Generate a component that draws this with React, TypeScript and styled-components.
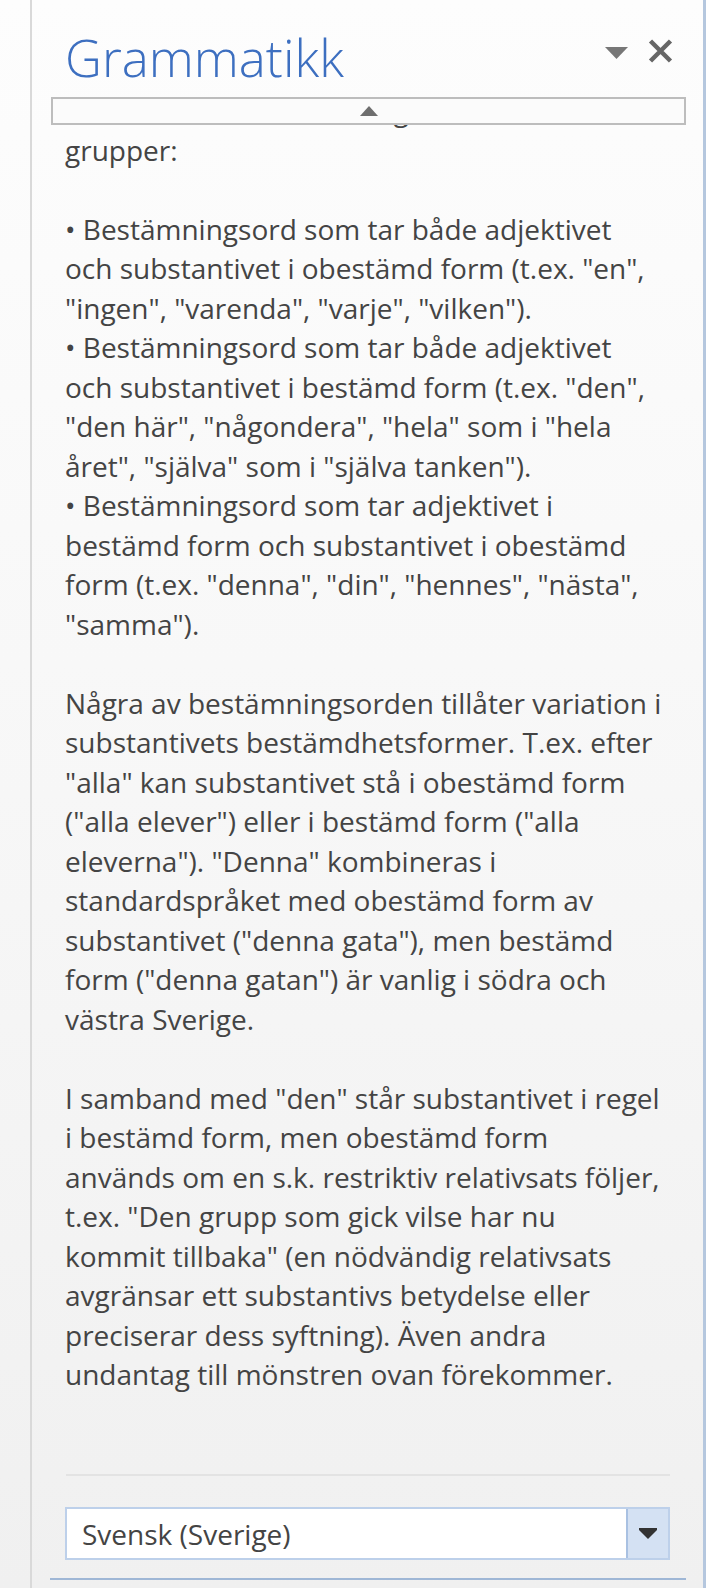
import React from "react";
import styled, { createGlobalStyle } from "styled-components";

const Global = createGlobalStyle`
  html, body { margin: 0; padding: 0; }
  body {
    width: 706px;
    height: 1588px;
    overflow: hidden;
    background: #f4f4f4;
    font-family: "Open Sans", "Noto Sans", sans-serif;
  }
`;

const Frame = styled.div`
  display: flex;
  width: 706px;
  height: 1588px;
  background: linear-gradient(180deg, #fdfdfd 0%, #f7f7f7 50%, #f0f0f0 100%);
`;

const Gutter = styled.div`
  width: 30px;
  flex: none;
`;

const Pane = styled.div`
  flex: 1;
  min-width: 0;
  display: flex;
  flex-direction: column;
  border-left: 2px solid #d9d9d9;
  border-right: 3px solid #b5c7de;
  overflow: hidden;
`;

const Header = styled.header`
  display: flex;
  align-items: flex-start;
  height: 89px;
  box-sizing: border-box;
  padding: 25px 30px 0 33px;
  flex: none;
`;

const Title = styled.h1`
  flex: 1;
  margin: 0;
  font-family: "Open Sans", "Noto Sans", sans-serif;
  font-weight: 300;
  font-size: 51px;
  line-height: 64px;
  color: #3d6fc0;
`;

const Controls = styled.div`
  display: flex;
  align-items: flex-start;
  gap: 20px;
  margin-top: 14px;
`;

const MenuIcon = styled.svg`
  margin-top: 8px;
  display: block;
`;

const CloseIcon = styled.svg`
  display: block;
`;

const Body = styled.div`
  position: relative;
  flex: 1;
  overflow: hidden;
`;

const ScrollUp = styled.div`
  position: absolute;
  top: 8px;
  left: 19px;
  right: 17px;
  height: 28px;
  box-sizing: border-box;
  border: 2px solid #bdbdbd;
  background: #fbfbfb;
  display: flex;
  align-items: center;
  justify-content: center;
`;

const Text = styled.div`
  padding: 2px 0 0 33px;
  font-size: 28px;
  line-height: 39.5px;
  color: #444444;
  white-space: nowrap;
`;

const Line = styled.div`
  height: 39.5px;
`;

const Footer = styled.footer`
  flex: none;
  display: flex;
  flex-direction: column;
  padding-bottom: 8px;
`;

const Rule = styled.div`
  height: 2px;
  background: #e3e3e3;
  margin: 0 33px 0 34px;
`;

const Select = styled.div`
  display: flex;
  height: 53px;
  box-sizing: border-box;
  margin: 31px 33px 0 33px;
  border: 2px solid #bdd0ea;
  background: #ffffff;
`;

const SelectValue = styled.div`
  flex: 1;
  display: flex;
  align-items: center;
  padding-left: 15px;
  font-size: 28px;
  color: #444444;
`;

const SelectButton = styled.div`
  width: 42px;
  box-sizing: border-box;
  border-left: 2px solid #a9c1e2;
  background: #d4e1f3;
  display: flex;
  align-items: center;
  justify-content: center;
`;

const BottomLine = styled.div`
  height: 2px;
  background: #9fb7d6;
  margin: 18px 17px 0 18px;
`;

const lines: string[] = [
  "grupper:",
  "",
  "• Bestämningsord som tar både adjektivet",
  'och substantivet i obestämd form (t.ex. "en",',
  '"ingen", "varenda", "varje", "vilken").',
  "• Bestämningsord som tar både adjektivet",
  'och substantivet i bestämd form (t.ex. "den",',
  '"den här", "någondera", "hela" som i "hela',
  'året", "själva" som i "själva tanken").',
  "• Bestämningsord som tar adjektivet i",
  "bestämd form och substantivet i obestämd",
  'form (t.ex. "denna", "din", "hennes", "nästa",',
  '"samma").',
  "",
  "Några av bestämningsorden tillåter variation i",
  "substantivets bestämdhetsformer. T.ex. efter",
  '"alla" kan substantivet stå i obestämd form',
  '("alla elever") eller i bestämd form ("alla',
  'eleverna"). "Denna" kombineras i',
  "standardspråket med obestämd form av",
  'substantivet ("denna gata"), men bestämd',
  'form ("denna gatan") är vanlig i södra och',
  "västra Sverige.",
  "",
  'I samband med "den" står substantivet i regel',
  "i bestämd form, men obestämd form",
  "används om en s.k. restriktiv relativsats följer,",
  't.ex. "Den grupp som gick vilse har nu',
  'kommit tillbaka" (en nödvändig relativsats',
  "avgränsar ett substantivs betydelse eller",
  "preciserar dess syftning). Även andra",
  "undantag till mönstren ovan förekommer.",
];

export default function App() {
  return (
    <>
      <Global />
      <Frame>
        <Gutter />
        <Pane>
          <Header>
            <Title>Grammatikk</Title>
            <Controls>
              <MenuIcon width="23" height="12" viewBox="0 0 23 12">
                <polygon points="0,0 23,0 11.5,12" fill="#777777" />
              </MenuIcon>
              <CloseIcon width="25" height="24" viewBox="0 0 25 24">
                <path
                  d="M2.5 2 L22.5 22 M22.5 2 L2.5 22"
                  stroke="#666666"
                  strokeWidth="4.5"
                  fill="none"
                />
              </CloseIcon>
            </Controls>
          </Header>
          <Body>
            <Text>
              <Line aria-hidden="true">Det delas i tre huvudsakliga</Line>
              {lines.map((l, i) => (
                <Line key={i}>{l}</Line>
              ))}
            </Text>
            <ScrollUp>
              <svg width="18" height="10" viewBox="0 0 18 10">
                <polygon points="9,0 18,10 0,10" fill="#6e6e6e" />
              </svg>
            </ScrollUp>
          </Body>
          <Footer>
            <Rule />
            <Select>
              <SelectValue>Svensk (Sverige)</SelectValue>
              <SelectButton>
                <svg width="18" height="11" viewBox="0 0 18 11">
                  <polygon points="0,0 18,0 18,2 9,11 0,2" fill="#333333" />
                </svg>
              </SelectButton>
            </Select>
            <BottomLine />
          </Footer>
        </Pane>
      </Frame>
    </>
  );
}
